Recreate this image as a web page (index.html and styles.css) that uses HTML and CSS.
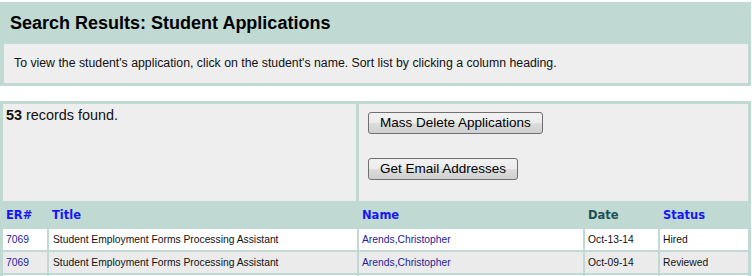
FILE: index.html
```html
<!DOCTYPE html>
<html>
<head>
<meta charset="utf-8">
<link rel="stylesheet" href="styles.css">
</head>
<body>
<div class="page">
  <div class="header">
    <h1 class="title">Search Results: Student Applications</h1>
    <div class="intro">To view the student's application, click on the student's name. Sort list by clicking a column heading.</div>
  </div>
  <div class="results">
    <div class="summary">
      <div class="count"><b>53</b> records found.</div>
      <div class="actions">
        <button class="btn">Mass Delete Applications</button>
        <button class="btn">Get Email Addresses</button>
      </div>
    </div>
    <div class="grid">
      <div class="th"><a href="#">ER#</a></div>
      <div class="th"><a href="#">Title</a></div>
      <div class="th"><a href="#">Name</a></div>
      <div class="th current">Date</div>
      <div class="th"><a href="#">Status</a></div>

      <div class="td odd"><a href="#">7069</a></div>
      <div class="td odd title-cell">Student Employment Forms Processing Assistant</div>
      <div class="td odd"><a href="#">Arends,Christopher</a></div>
      <div class="td odd">Oct-13-14</div>
      <div class="td odd">Hired</div>

      <div class="td even"><a href="#">7069</a></div>
      <div class="td even title-cell">Student Employment Forms Processing Assistant</div>
      <div class="td even"><a href="#">Arends,Christopher</a></div>
      <div class="td even">Oct-09-14</div>
      <div class="td even">Reviewed</div>

      <div class="td odd"></div>
      <div class="td odd"></div>
      <div class="td odd"></div>
      <div class="td odd"></div>
      <div class="td odd"></div>
    </div>
  </div>
</div>
</body>
</html>
```

FILE: styles.css
```css
html, body {
  margin: 0;
  padding: 0;
  background: #ffffff;
  font-family: "Liberation Sans", Arial, sans-serif;
  color: #000;
  overflow: hidden;
}

.page {
  width: 751px;
  padding-top: 2px;
}

.header {
  background: #c1d9d3;
  padding: 0 3px 3px 4px;
}

.title {
  margin: 0;
  height: 42px;
  line-height: 42px;
  padding-left: 6px;
  font-size: 18px;
  font-weight: bold;
  color: #000;
}

.intro {
  background: #eeeeee;
  height: 39px;
  line-height: 39px;
  padding-left: 10px;
  font-size: 12.3px;
  color: #111;
}

.results {
  margin-top: 15px;
  background: #c1d9d3;
  padding: 3px 3px 0 3px;
}

.summary {
  display: grid;
  grid-template-columns: 353px 389px;
  column-gap: 3px;
  height: 97px;
}

.count {
  background: #eeeeee;
  padding: 3px 0 0 3px;
  font-size: 14.4px;
  line-height: 17px;
  color: #111;
}

.actions {
  background: #eeeeee;
  display: flex;
  flex-direction: column;
  align-items: flex-start;
  padding: 8px 0 0 9px;
  gap: 24px;
}

.btn {
  height: 22px;
  margin: 0;
  padding: 0 11px;
  border: 1px solid #707070;
  border-radius: 3px;
  background: linear-gradient(#f2f2f2 0%, #ebebeb 50%, #dddddd 51%, #cfcfcf 100%);
  font-family: "Liberation Sans", Arial, sans-serif;
  font-size: 13.5px;
  color: #000;
  line-height: 20px;
}

.grid {
  display: grid;
  grid-template-columns: 44px 308px 224px 73px 88px;
  grid-auto-rows: 21px;
  grid-template-rows: 24px;
  gap: 2px;
  padding-top: 2px;
}

.th {
  padding-left: 3px;
  font-family: "DejaVu Sans", Verdana, sans-serif;
  font-weight: bold;
  font-size: 11.5px;
  line-height: 24px;
}

.th a {
  color: #1616f5;
  text-decoration: none;
}

.th.current {
  color: #1d5252;
}

.td {
  padding-left: 3px;
  font-size: 10.3px;
  line-height: 21px;
  color: #111;
  white-space: nowrap;
  overflow: hidden;
}

.td a {
  color: #23239c;
  text-decoration: none;
}

.title-cell {
  padding-left: 4px;
}

.odd {
  background: #ffffff;
}

.even {
  background: #ebebeb;
}
```
